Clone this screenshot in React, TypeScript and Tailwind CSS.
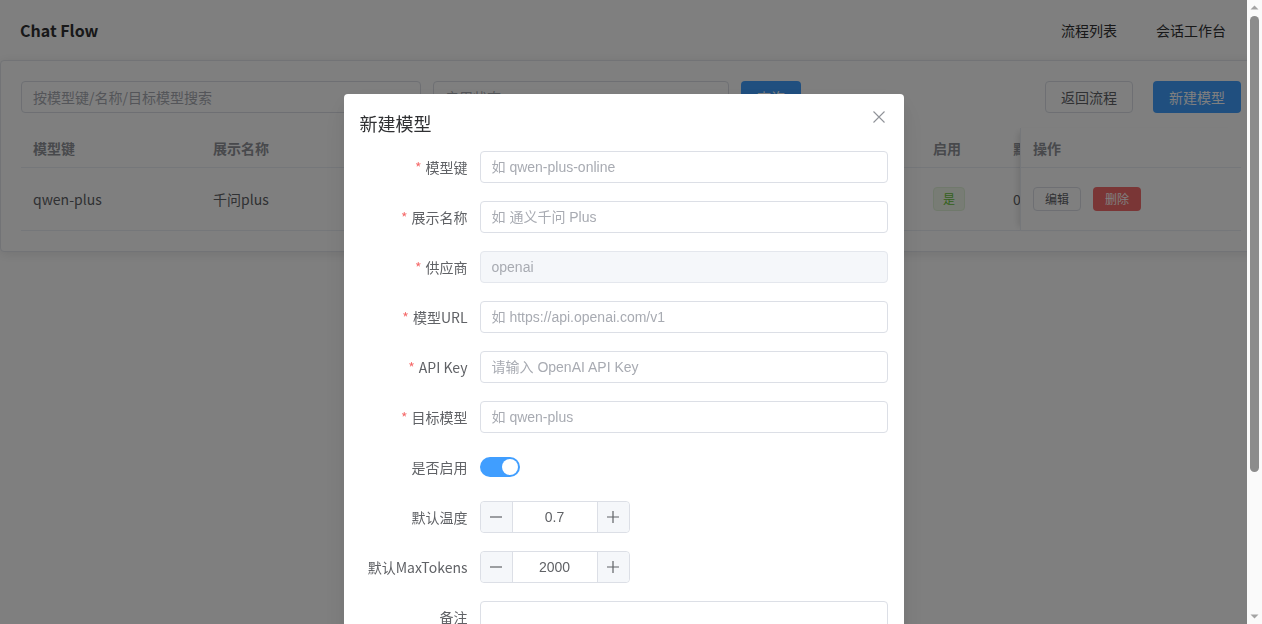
import React from 'react';

const cjk = "font-['Noto_Sans_CJK_SC',sans-serif]";
const arial = "font-['Liberation_Sans','Noto_Sans_CJK_SC',sans-serif]";

interface Field {
  label: string;
  placeholder?: string;
  value?: string;
  disabled?: boolean;
}

const textFields: Field[] = [
  { label: '模型键', placeholder: '如 qwen-plus-online' },
  { label: '展示名称', placeholder: '如 通义千问 Plus' },
  { label: '供应商', value: 'openai', disabled: true },
  { label: '模型URL', placeholder: '如 https://api.openai.com/v1' },
  { label: 'API Key', placeholder: '请输入 OpenAI API Key' },
  { label: '目标模型', placeholder: '如 qwen-plus' },
];

const FormLabel: React.FC<{ text: string; required?: boolean }> = ({ text, required }) => (
  <div className={`w-[120px] shrink-0 pr-3 h-8 flex items-center justify-end text-sm text-[#606266] ${cjk}`}>
    {required && <span className="text-[#f56c6c] mr-1">*</span>}
    {text}
  </div>
);

const NumberInput: React.FC<{ value: string }> = ({ value }) => (
  <div className="w-[150px] h-8 flex border border-[#dcdfe6] rounded">
    <div className="w-8 flex items-center justify-center bg-[#f5f7fa] border-r border-[#dcdfe6] rounded-l">
      <svg width="14" height="14" viewBox="0 0 14 14"><path d="M1 7h12" stroke="#606266" strokeWidth="1.2" /></svg>
    </div>
    <div className={`flex-1 flex items-center justify-center text-sm text-[#606266] ${arial}`}>{value}</div>
    <div className="w-8 flex items-center justify-center bg-[#f5f7fa] border-l border-[#dcdfe6] rounded-r">
      <svg width="14" height="14" viewBox="0 0 14 14"><path d="M1 7h12M7 1v12" stroke="#606266" strokeWidth="1.2" /></svg>
    </div>
  </div>
);

// the overlay's scrollbar, drawn since the headless browser hides real ones
const FakeScrollbar: React.FC = () => (
  <div className="fixed right-0 top-0 bottom-0 z-[60] w-[15px] bg-[#fafafa] flex flex-col items-center">
    <svg width="15" height="15" viewBox="0 0 15 15" className="shrink-0"><path d="M3.5 9.5h8l-4-4z" fill="#a3a3a3" /></svg>
    <div className="mt-px h-[456px] w-[9px] rounded-full bg-[#8c8c8c]" />
    <div className="flex-1" />
    <svg width="15" height="15" viewBox="0 0 15 15" className="shrink-0"><path d="M3.5 5.5h8l-4 4z" fill="#a3a3a3" /></svg>
  </div>
);

const App: React.FC = () => {
  return (
    <div className={`min-h-screen bg-white ${cjk}`}>
      <header className="h-[60px] flex items-center justify-between px-5">
        <h1 className="text-base font-bold text-[#303133]">Chat Flow</h1>
        <nav className="flex gap-[39px] pr-4 text-sm text-[#303133]">
          <span>流程列表</span>
          <span>会话工作台</span>
        </nav>
      </header>

      <div className="bg-white border border-[#e4e7ed] rounded shadow-[0_2px_12px_rgba(0,0,0,0.1)] p-5">
        <div className="flex items-center justify-between">
          <div className="flex items-center gap-3">
            <div className="w-[400px] h-8 border border-[#dcdfe6] rounded px-[11px] flex items-center text-sm text-[#a8abb2]">按模型键/名称/目标模型搜索</div>
            <div className="w-[296px] h-8 border border-[#dcdfe6] rounded px-[11px] flex items-center text-sm text-[#a8abb2]">启用状态</div>
            <button className="w-[60px] h-8 rounded bg-[#409eff] text-white text-sm">查询</button>
          </div>
          <div className="flex items-center gap-5">
            <button className="w-[88px] h-8 rounded border border-[#dcdfe6] text-sm text-[#606266]">返回流程</button>
            <button className="w-[88px] h-8 rounded bg-[#409eff] text-white text-sm">新建模型</button>
          </div>
        </div>

        <div className="mt-[15px] flex text-sm">
          <div className="flex-1 overflow-hidden">
            <div className="flex h-10 items-center border-b border-[#ebeef5] font-bold text-[#909399]">
              <div className="w-[180px] shrink-0 px-3">模型键</div>
              <div className="w-[180px] shrink-0 px-3">展示名称</div>
              <div className="w-[140px] shrink-0 px-3">供应商</div>
              <div className="w-[180px] shrink-0 px-3">目标模型</div>
              <div className="w-[220px] shrink-0 px-3">模型URL</div>
              <div className="w-[80px] shrink-0 px-3">启用</div>
              <div className="w-[100px] shrink-0 px-3 whitespace-nowrap">默认温度</div>
            </div>
            <div className="flex h-[63px] items-center border-b border-[#ebeef5] text-[#606266]">
              <div className="w-[180px] shrink-0 px-3">qwen-plus</div>
              <div className="w-[180px] shrink-0 px-3">千问plus</div>
              <div className="w-[140px] shrink-0 px-3">openai</div>
              <div className="w-[180px] shrink-0 px-3">qwen-plus</div>
              <div className="w-[220px] shrink-0 px-3 truncate">https://dashscope.com</div>
              <div className="w-[80px] shrink-0 px-3">
                <span className="inline-flex h-6 w-8 items-center justify-center rounded border border-[#e1f3d8] bg-[#f0f9eb] text-xs text-[#67c23a]">是</span>
              </div>
              <div className="w-[100px] shrink-0 px-3">0.7</div>
            </div>
          </div>
          <div className="relative w-[221px] shrink-0 bg-white border-l border-[#ebeef5] shadow-[-6px_0_6px_-4px_rgba(0,0,0,0.12)]">
            <div className="flex h-10 items-center border-b border-[#ebeef5] px-3 font-bold text-[#909399]">操作</div>
            <div className="flex h-[63px] items-center gap-3 border-b border-[#ebeef5] px-3">
              <button className="h-6 w-12 rounded border border-[#dcdfe6] text-xs text-[#606266]">编辑</button>
              <button className="h-6 w-12 rounded bg-[#f56c6c] text-xs text-white">删除</button>
            </div>
          </div>
        </div>
      </div>

      <div className="fixed inset-0 z-50 overflow-y-auto bg-black/50 pr-[15px]">
        <div className="relative mx-auto mt-[94px] mb-[50px] w-[560px] rounded bg-white p-4 shadow-[0_12px_32px_4px_rgba(0,0,0,0.04),0_8px_20px_rgba(0,0,0,0.08)]">
          <div className="pt-px pb-4">
            <h2 className="text-lg leading-6 text-[#303133]">新建模型</h2>
          </div>
          <button className="absolute right-[17px] top-[15px] p-0.5">
            <svg width="12" height="12" viewBox="0 0 12 12"><path d="M0.5 0.5l11 11M11.5 0.5l-11 11" stroke="#909399" strokeWidth="1.1" /></svg>
          </button>

          <div className="flex flex-col gap-[18px]">
            {textFields.map(f => (
              <div key={f.label} className="flex">
                <FormLabel text={f.label} required />
                <div
                  className={`flex-1 h-8 rounded border px-[11px] flex items-center text-sm text-[#a8abb2] ${arial} ${f.disabled ? 'bg-[#f5f7fa] border-[#e4e7ed]' : 'border-[#dcdfe6]'}`}
                >
                  {f.value ?? f.placeholder}
                </div>
              </div>
            ))}
            <div className="flex">
              <FormLabel text="是否启用" />
              <div className="h-8 flex items-center">
                <div className="w-10 h-5 rounded-full bg-[#409eff] flex items-center justify-end pr-0.5">
                  <div className="w-4 h-4 rounded-full bg-white" />
                </div>
              </div>
            </div>
            <div className="flex">
              <FormLabel text="默认温度" />
              <NumberInput value="0.7" />
            </div>
            <div className="flex">
              <FormLabel text="默认MaxTokens" />
              <NumberInput value="2000" />
            </div>
            <div className="flex">
              <FormLabel text="备注" />
              <div className="flex-1 h-[75px] rounded border border-[#dcdfe6]" />
            </div>
          </div>

          <div className="flex justify-end gap-3 pt-[34px]">
            <button className="h-8 px-[15px] rounded border border-[#dcdfe6] text-sm text-[#606266]">取消</button>
            <button className="h-8 px-[15px] rounded bg-[#409eff] text-sm text-white">确定</button>
          </div>
        </div>
      </div>
      <FakeScrollbar />
    </div>
  );
};

export default App;
